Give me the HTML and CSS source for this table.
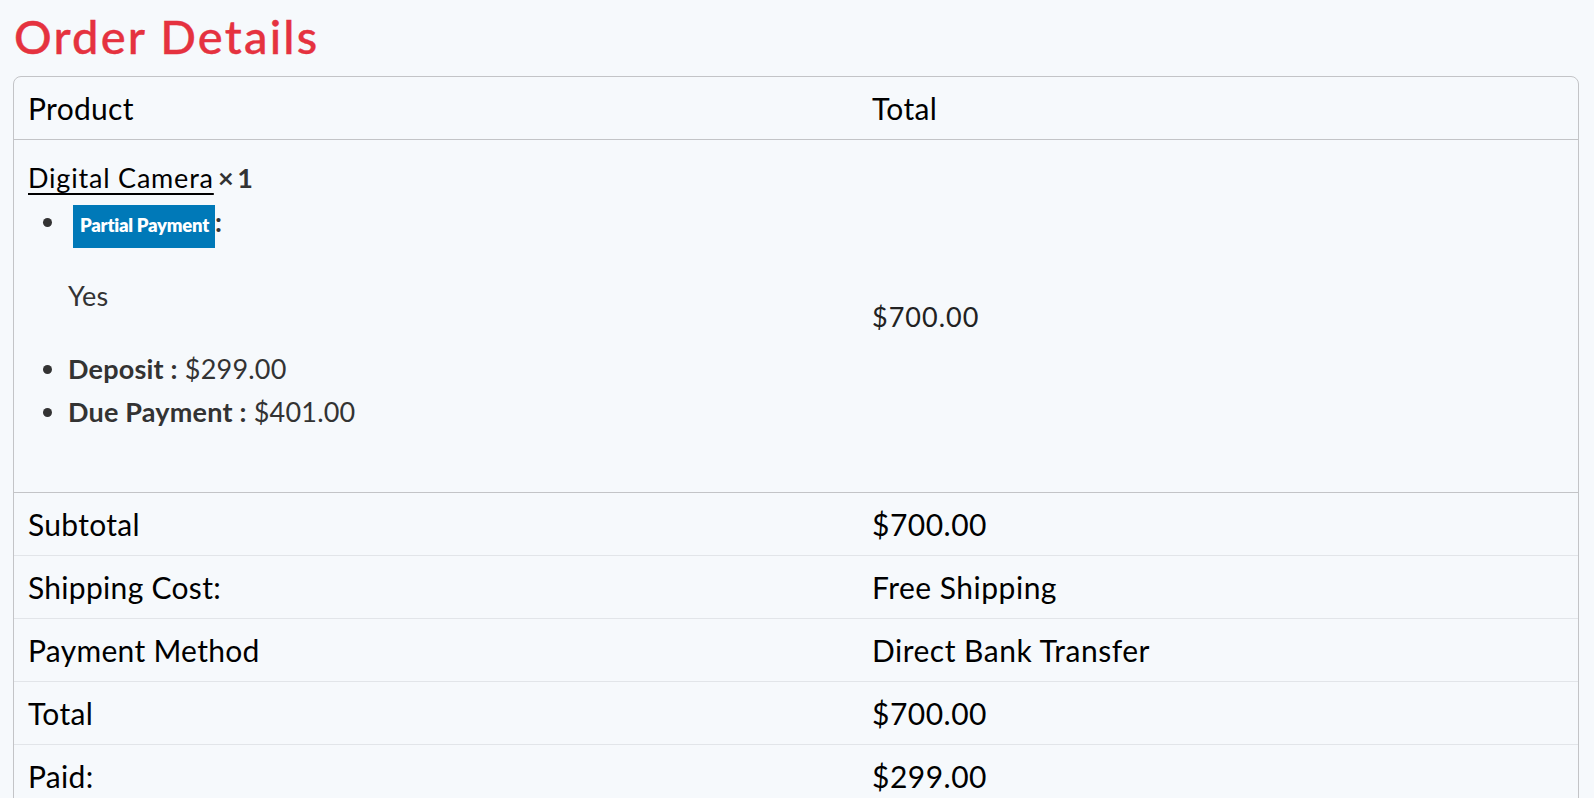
FILE: index.html
```html
<!DOCTYPE html>
<html lang="en">
<head>
<meta charset="utf-8">
<title>Order Details</title>
<link rel="stylesheet" href="styles.css">
</head>
<body>
<main class="page">
  <h1 class="page-title">Order Details</h1>
  <div class="card">
    <table class="order-table">
      <colgroup>
        <col class="col-product">
        <col class="col-total">
      </colgroup>
      <thead>
        <tr>
          <th class="head-cell">Product</th>
          <th class="head-cell">Total</th>
        </tr>
      </thead>
      <tbody>
        <tr class="item-row">
          <td class="item-name">
            <a class="item-link" href="#">Digital Camera</a> <strong class="item-qty">×&nbsp;1</strong>
            <ul class="item-meta">
              <li class="meta-item">
                <strong class="meta-label"><span class="badge">Partial Payment</span>:</strong>
                <p class="meta-value">Yes</p>
              </li>
              <li class="meta-item"><strong class="meta-label">Deposit :</strong> $299.00</li>
              <li class="meta-item"><strong class="meta-label">Due Payment :</strong> $401.00</li>
            </ul>
          </td>
          <td class="item-total">$700.00</td>
        </tr>
      </tbody>
      <tfoot>
        <tr class="foot-row">
          <th class="foot-label">Subtotal</th>
          <td class="foot-value">$700.00</td>
        </tr>
        <tr class="foot-row">
          <th class="foot-label">Shipping Cost:</th>
          <td class="foot-value">Free Shipping</td>
        </tr>
        <tr class="foot-row">
          <th class="foot-label">Payment Method</th>
          <td class="foot-value">Direct Bank Transfer</td>
        </tr>
        <tr class="foot-row">
          <th class="foot-label">Total</th>
          <td class="foot-value">$700.00</td>
        </tr>
        <tr class="foot-row">
          <th class="foot-label">Paid:</th>
          <td class="foot-value">$299.00</td>
        </tr>
      </tfoot>
    </table>
  </div>
</main>
</body>
</html>
```

FILE: styles.css
```css
* { box-sizing: border-box; }

html, body {
  margin: 0;
  background: #f6f9fc;
}

body {
  font-family: Lato, "Noto Sans", sans-serif;
  color: #111;
}

.page {
  padding: 8px 15px 40px 13px;
}

.page-title {
  margin: 0 0 12px 1px;
  font-size: 47px;
  line-height: 56px;
  font-weight: 500;
  letter-spacing: 2.2px;
  color: #e5323f;
  -webkit-text-stroke: 0.4px #e5323f;
}

.card {
  border: 1px solid #c3c4c7;
  border-radius: 8px;
  overflow: hidden;
}

.order-table {
  width: 100%;
  border-collapse: collapse;
  table-layout: fixed;
}

.col-product { width: 844px; }

.head-cell {
  text-align: left;
  font-weight: 400;
  font-size: 30px;
  line-height: 36px;
  letter-spacing: 0.3px;
  padding: 13px 14px;
  color: #000;
  border-bottom: 1px solid #c3c4c7;
}

.item-row td {
  border-bottom: 1px solid #c3c4c7;
}

.item-name {
  vertical-align: top;
  padding: 16px 14px 0 14px;
  font-size: 27px;
  line-height: 43px;
  letter-spacing: 0.2px;
  color: #333;
}

.item-link {
  color: #000;
  letter-spacing: 0.8px;
  text-decoration: underline;
  text-underline-offset: 5px;
  text-decoration-thickness: 2px;
}

.item-qty {
  font-weight: 700;
  color: #333;
  margin-left: -3px;
  letter-spacing: -1.5px;
}

.item-meta {
  margin: 1px 0 59px 0;
  padding-left: 40px;
}

.meta-label {
  font-weight: 700;
}

.badge {
  display: inline-block;
  margin-left: 5px;
  background: #0079b8;
  color: #fff;
  font-size: 18.5px;
  line-height: 24px;
  font-weight: 800;
  padding: 8px 6px 11px 7px;
  vertical-align: baseline;
  letter-spacing: -0.25px;
}

.meta-value {
  margin: 26px 0 30px 0;
  font-weight: 400;
}

.item-total {
  vertical-align: middle;
  font-size: 27px;
  line-height: 43px;
  letter-spacing: 1px;
  padding: 0 14px;
  color: #222;
}

.foot-label,
.foot-value {
  text-align: left;
  font-weight: 400;
  font-size: 30px;
  line-height: 36px;
  letter-spacing: 0.3px;
  padding: 13px 14px;
  color: #000;
}

.foot-value {
  letter-spacing: 0.5px;
}

.foot-row + .foot-row .foot-label,
.foot-row + .foot-row .foot-value {
  border-top: 1px solid #e2e5e9;
}
```
